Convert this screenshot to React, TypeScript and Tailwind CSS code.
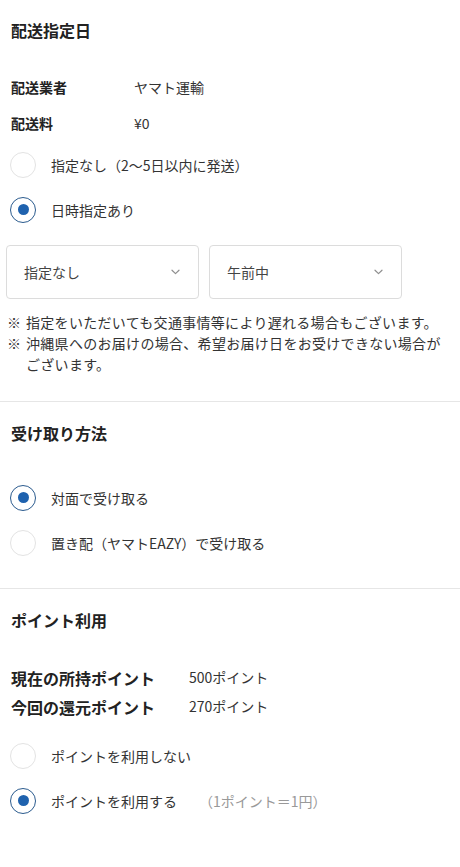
import React from "react";

const font = { fontFamily: '"Noto Sans CJK JP", "Noto Sans", sans-serif' };

function Radio({ checked, label, extra }: { checked: boolean; label: string; extra?: string }) {
  return (
    <div className="flex h-[45px] items-center">
      <div
        className={
          "ml-[10px] flex h-[26px] w-[26px] shrink-0 items-center justify-center rounded-full border bg-white " +
          (checked ? "border-[#2b5b8e] border-[1.5px]" : "border-[#e3e3e3]")
        }
      >
        {checked && <div className="h-[11px] w-[11px] rounded-full bg-[#1f62ae]" />}
      </div>
      <span className="ml-[15px] text-[14px] leading-[20px] text-[#333]">{label}</span>
      {extra && <span className="ml-[22px] text-[14px] leading-[20px] text-[#999]">{extra}</span>}
    </div>
  );
}

function Chevron() {
  return (
    <svg width="9" height="6" viewBox="0 0 9 6" fill="none">
      <path d="M1 1.2L4.5 4.6L8 1.2" stroke="#8f8f8f" strokeWidth="1.2" strokeLinecap="round" strokeLinejoin="round" />
    </svg>
  );
}

function Select({ value }: { value: string }) {
  return (
    <div className="flex h-[54px] w-[193px] items-center justify-between rounded-[4px] border border-[#dcdcdc] bg-white pl-[17px] pr-[18px]">
      <span className="text-[14px] text-[#444]">{value}</span>
      <Chevron />
    </div>
  );
}

export default function App() {
  return (
    <div className="min-h-[867px] w-[460px] bg-white" style={font}>
      {/* Section 1 */}
      <div className="pt-[18px]">
        <h2 className="px-[11px] text-[16px] font-bold leading-[24px] text-[#222]">配送指定日</h2>
        <div className="mt-[27px] px-[11px]">
          <div className="flex h-[36px] items-center">
            <span className="w-[123px] text-[14px] font-bold text-[#222]">配送業者</span>
            <span className="text-[14px] text-[#333]">ヤマト運輸</span>
          </div>
          <div className="flex h-[36px] items-center">
            <span className="w-[123px] text-[14px] font-bold text-[#222]">配送料</span>
            <span className="text-[14px] text-[#333]">¥0</span>
          </div>
        </div>
        <div className="mt-[1px]">
          <Radio checked={false} label="指定なし（2〜5日以内に発送）" />
          <Radio checked={true} label="日時指定あり" />
        </div>
        <div className="mt-[13px] flex gap-[10px] pl-[6px]">
          <Select value="指定なし" />
          <Select value="午前中" />
        </div>
        <div className="mt-[13px] pl-[7px] pr-[18px] text-[14px] leading-[21px] tracking-[0.3px] text-[#333]">
          <div className="flex">
            <span className="w-[19px] shrink-0 tracking-normal">※</span>
            <span>指定をいただいても交通事情等により遅れる場合もございます。</span>
          </div>
          <div className="flex">
            <span className="w-[19px] shrink-0 tracking-normal">※</span>
            <span>沖縄県へのお届けの場合、希望お届け日をお受けできない場合がございます。</span>
          </div>
        </div>
        <div className="mt-[26px] h-px bg-[#e6e6e6]" />
      </div>

      {/* Section 2 */}
      <div className="pt-[19px]">
        <h2 className="px-[11px] text-[16px] font-bold leading-[24px] text-[#222]">受け取り方法</h2>
        <div className="mt-[30px]">
          <Radio checked={true} label="対面で受け取る" />
          <Radio checked={false} label="置き配（ヤマトEAZY）で受け取る" />
        </div>
        <div className="mt-[23px] h-px bg-[#e6e6e6]" />
      </div>

      {/* Section 3 */}
      <div className="pt-[19px]">
        <h2 className="px-[11px] text-[16px] font-bold leading-[24px] text-[#222]">ポイント利用</h2>
        <div className="mt-[31px] px-[11px]">
          <div className="flex h-[29px] items-center">
            <span className="w-[178px] text-[16px] font-bold text-[#222]">現在の所持ポイント</span>
            <span className="text-[14px] text-[#333]">500ポイント</span>
          </div>
          <div className="flex h-[29px] items-center">
            <span className="w-[178px] text-[16px] font-bold text-[#222]">今回の還元ポイント</span>
            <span className="text-[14px] text-[#333]">270ポイント</span>
          </div>
        </div>
        <div className="mt-[12px]">
          <Radio checked={false} label="ポイントを利用しない" />
          <Radio checked={true} label="ポイントを利用する" extra="（1ポイント＝1円）" />
        </div>
      </div>
    </div>
  );
}
